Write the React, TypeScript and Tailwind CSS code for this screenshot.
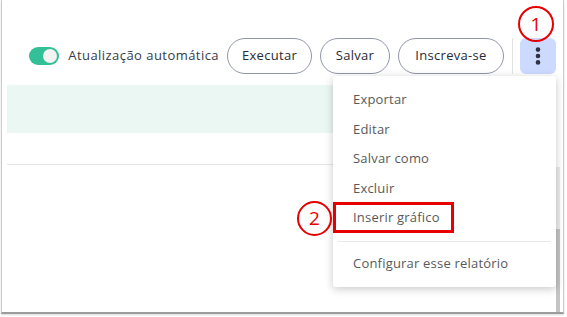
const MENU_ITEMS = ["Exportar", "Editar", "Salvar como", "Excluir", "Inserir gráfico"];

function Marker({ n, className }: { n: string; className: string }) {
  return (
    <div
      className={
        "absolute flex items-center justify-center rounded-full border-2 border-[#e60000] text-[19px] leading-none text-[#e60000] " +
        className
      }
    >
      {n}
    </div>
  );
}

function Kebab() {
  return (
    <svg width="20" height="20" viewBox="0 0 20 20" fill="#2f3340">
      <circle cx="10" cy="3.6" r="2.3" />
      <circle cx="10" cy="10" r="2.3" />
      <circle cx="10" cy="16.4" r="2.3" />
    </svg>
  );
}

export default function App() {
  return (
    <div className="relative h-[317px] w-[567px] overflow-hidden bg-white font-['Open_Sans',sans-serif]">
      <div className="ml-[1px] flex h-[314px] w-[563px] flex-col border-x border-b-2 border-x-[#cdcdcd] border-b-[#9c9c9c] pl-[5px] pr-[3px] shadow-[0_1px_2px_rgba(0,0,0,0.15)]">
        {/* toolbar */}
        <div className="flex items-center justify-end pr-[4px] pt-[38px]">
          <div className="flex h-[18px] w-[30px] items-center justify-end rounded-full bg-[#33bf97] pr-[2px]">
            <div className="h-[14px] w-[14px] rounded-full bg-[#f3f3f3]" />
          </div>
          <span className="ml-[9px] text-[13px] tracking-[0.45px] text-[#363b47]">Atualização automática</span>
          <button className="ml-[8px] h-[36px] w-[85px] rounded-full border border-[#8f96a8] text-[13px] font-medium tracking-[0.3px] text-[#262b36]">
            Executar
          </button>
          <button className="ml-[8px] h-[36px] w-[70px] rounded-full border border-[#8f96a8] text-[13px] font-medium tracking-[0.3px] text-[#262b36]">
            Salvar
          </button>
          <button className="ml-[8px] h-[36px] w-[106px] rounded-full border border-[#8f96a8] text-[13px] font-medium tracking-[0.3px] text-[#262b36]">
            Inscreva-se
          </button>
          <div className="ml-[8px] h-[36px] w-px bg-[#e3e3e3]" />
          <button className="ml-[7px] flex h-[36px] w-[36px] items-center justify-center rounded-md bg-[#cddaff]">
            <Kebab />
          </button>
        </div>

        <div className="mr-[4px] mt-[11px] h-[48px] bg-[#eaf7f3]" />
        <div className="mr-[4px] mt-[31px] h-px bg-[#e6e6e6]" />

        {/* body with scrollbar */}
        <div className="flex flex-1 pt-[2px]">
          <div className="flex-1" />
          <div className="flex w-[4px] flex-col bg-[#ececec]">
            <div className="h-[62px]" />
            <div className="flex-1 bg-[#c4c4c4]" />
          </div>
        </div>
      </div>

      {/* dropdown menu */}
      <div className="absolute left-[333px] top-[76px] w-[223px] rounded-[3px] bg-white pb-[8px] pt-[9px] shadow-[0_2px_8px_rgba(0,0,0,0.22)]">
        {MENU_ITEMS.map((item) => (
          <div key={item} className="flex h-[29.5px] items-center px-[20px] text-[13px] tracking-[0.2px] text-[#595959]">
            {item}
          </div>
        ))}
        <div className="mx-[5px] mb-[8px] mt-[8px] h-px bg-[#e8e8e8]" />
        <div className="flex h-[29px] items-center px-[20px] text-[13px] tracking-[0.2px] text-[#595959]">
          Configurar esse relatório
        </div>
      </div>

      {/* annotations */}
      <div className="absolute left-[333px] top-[202px] h-[31px] w-[121px] border-[3px] border-[#e60000]" />
      <Marker n="1" className="left-[518px] top-[6px] h-[36px] w-[36px]" />
      <Marker n="2" className="left-[297px] top-[201px] h-[35px] w-[35px]" />
    </div>
  );
}
